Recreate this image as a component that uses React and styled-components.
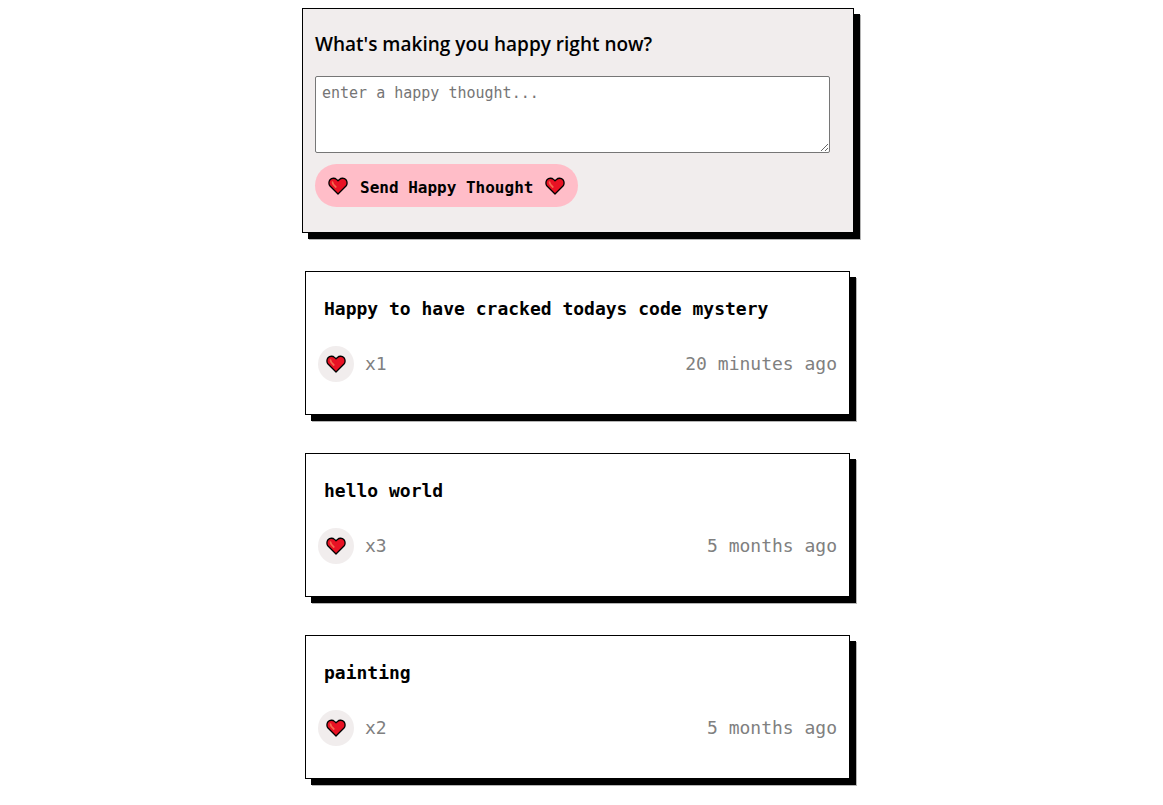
import React, { useState } from "react";
import styled, { createGlobalStyle } from "styled-components";

const GlobalStyle = createGlobalStyle`
  *, *::before, *::after { box-sizing: border-box; }
  body {
    margin: 0;
    background: #fff;
    color: #000;
    font-family: "DejaVu Sans Mono", monospace;
  }
`;

const Page = styled.main`
  max-width: 559px;
  margin: 0 auto;
  padding: 8px 7px 24px 0;
`;

const Form = styled.form`
  display: flex;
  flex-direction: column;
  align-items: flex-start;
  padding: 21px 12px 25px;
  border: 1px solid #000;
  background: #f1eded;
  box-shadow: 6px 6px 0 #000, 7px 7px 0 #b5b5b5;
`;

const Question = styled.label`
  margin-bottom: 18px;
  font-family: "Open Sans", "Noto Sans", sans-serif;
  font-size: 19px;
  font-weight: 600;
  line-height: 28px;
`;

const ThoughtInput = styled.textarea`
  width: 98%;
  height: 77px;
  margin-bottom: 11px;
  padding: 6px;
  border: 1px solid #767676;
  border-radius: 2px;
  background: #fff;
  font-family: inherit;
  font-size: 15px;
  line-height: 20px;
  &::placeholder { color: #757575; }
`;

const SendButton = styled.button`
  display: flex;
  align-items: center;
  gap: 12px;
  height: 43px;
  padding: 0 13px;
  border: 0;
  border-radius: 22px;
  background: #ffbdc8;
  color: #000;
  font-family: inherit;
  font-size: 16px;
  font-weight: 700;
  cursor: pointer;
`;

const SendLabel = styled.span`
  padding-top: 3px;
`;

const ThoughtList = styled.section`
  display: grid;
  gap: 38px;
  margin: 38px 4px 0 3px;
`;

const Card = styled.article`
  padding: 24px 12px 32px;
  border: 1px solid #000;
  background: #fff;
  box-shadow: 6px 6px 0 #000, 7px 7px 0 #b5b5b5;
`;

const Message = styled.h2`
  margin: 0 6px 24px;
  font-size: 18px;
  font-weight: 700;
  line-height: 26px;
`;

const CardFooter = styled.footer`
  display: flex;
  align-items: center;
  justify-content: space-between;
  color: #808080;
  font-size: 18px;
  line-height: 20px;
`;

const Likes = styled.div`
  display: flex;
  align-items: center;
  gap: 11px;
`;

const LikeButton = styled.button`
  display: grid;
  place-items: center;
  width: 36px;
  height: 36px;
  padding: 0;
  border: 0;
  border-radius: 50%;
  background: #f1eded;
  cursor: pointer;
`;

const HeartSvg = styled.svg`
  display: block;
  flex: none;
`;

const Heart = () => (
  <HeartSvg width="20" height="18" viewBox="0 0 20 18" aria-hidden="true">
    <path
      d="M10 17 2 9C.6 7.400.5 4.400 2 2.700 3.800.8 6.800.8 8.500 2.400L10 3.800 11.500 2.400C13.200.8 16.200.8 18 2.700 19.500 4.400 19.400 7.400 18 9Z"
      fill="#e81224"
      stroke="#000"
      strokeWidth="1.300"
      strokeLinejoin="round"
    />
    <path d="M4.500 5C4.500 6.800 5.500 8 7.800 10" fill="none" stroke="#f4694f" strokeWidth="1.700" strokeLinecap="round" />
  </HeartSvg>
);

const initialThoughts = [
  { id: 1, message: "Happy to have cracked todays code mystery", hearts: 1, time: "20 minutes ago" },
  { id: 2, message: "hello world", hearts: 3, time: "5 months ago" },
  { id: 3, message: "painting", hearts: 2, time: "5 months ago" },
];

export default function App() {
  const [thoughts, setThoughts] = useState(initialThoughts);
  const [text, setText] = useState("");

  const send = (event) => {
    event.preventDefault();
    if (!text.trim()) return;
    setThoughts([{ id: Date.now(), message: text, hearts: 0, time: "just now" }, ...thoughts]);
    setText("");
  };

  const like = (id) =>
    setThoughts(thoughts.map((t) => (t.id === id ? { ...t, hearts: t.hearts + 1 } : t)));

  return (
    <>
      <GlobalStyle />
      <Page>
        <Form onSubmit={send}>
          <Question htmlFor="thought">What's making you happy right now?</Question>
          <ThoughtInput
            id="thought"
            placeholder="enter a happy thought..."
            value={text}
            onChange={(event) => setText(event.target.value)}
          />
          <SendButton type="submit">
            <Heart />
            <SendLabel>Send Happy Thought</SendLabel>
            <Heart />
          </SendButton>
        </Form>
        <ThoughtList>
          {thoughts.map((thought) => (
            <Card key={thought.id}>
              <Message>{thought.message}</Message>
              <CardFooter>
                <Likes>
                  <LikeButton type="button" aria-label="Like" onClick={() => like(thought.id)}>
                    <Heart />
                  </LikeButton>
                  <span>x{thought.hearts}</span>
                </Likes>
                <time>{thought.time}</time>
              </CardFooter>
            </Card>
          ))}
        </ThoughtList>
      </Page>
    </>
  );
}
